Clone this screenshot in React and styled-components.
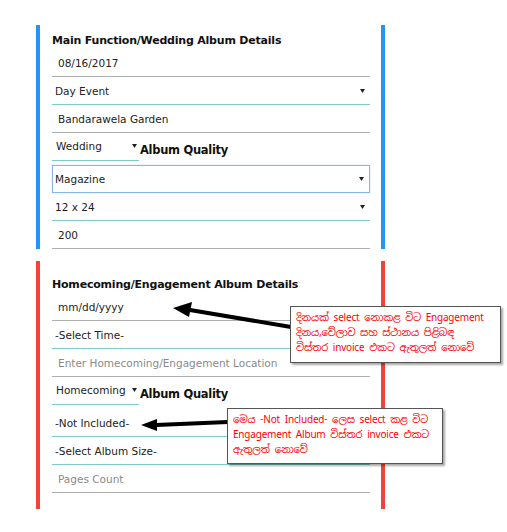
import React from "react";
import styled, { createGlobalStyle } from "styled-components";

const GlobalStyle = createGlobalStyle`
  html, body { margin: 0; padding: 0; background: #fff; }
  body { font-family: "DejaVu Sans", Verdana, sans-serif; }
`;

const Page = styled.div`
  position: relative;
  width: 507px;
  height: 532px;
  box-sizing: border-box;
  padding: 25px 0 0 36px;
  overflow: hidden;
`;

const Panel = styled.section`
  width: 349px;
  box-sizing: border-box;
  border-left: 4px solid ${(p) => p.$color};
  border-right: 4px solid ${(p) => p.$color};
  padding: ${(p) => p.$pt}px 11px ${(p) => p.$pb}px 12px;
  margin-bottom: 12px;
`;

const Title = styled.h3`
  margin: 0;
  font-size: 11px;
  letter-spacing: -0.2px;
  line-height: 16px;
  font-weight: bold;
  color: #111;
`;

const Field = styled.div`
  height: 28px;
  box-sizing: border-box;
  display: flex;
  align-items: center;
  justify-content: space-between;
  padding: 0 5px 0 ${(p) => (p.$select ? 3 : 6)}px;
  margin-top: ${(p) => (p.$gap ? 4 : 0)}px;
  border-bottom: 1px solid ${(p) => (p.$teal ? "#80cbc4" : "#b0b0b0")};
  font-size: 10.5px;
  color: ${(p) => (p.$placeholder ? "#8a8a8a" : "#222")};
`;

const FocusField = styled(Field)`
  border: 1px solid #8ab6ea;
  box-shadow: 0 0 1px rgba(80, 140, 220, 0.5);
  padding-left: 2px;
`;

const QualityRow = styled.div`
  display: flex;
  align-items: center;
  height: 28px;
`;

const SmallSelect = styled.div`
  width: 87px;
  height: 28px;
  box-sizing: border-box;
  display: flex;
  align-items: center;
  justify-content: space-between;
  padding: 0 2px 2px 4px;
  border-bottom: 1px solid #80cbc4;
  font-size: 10.5px;
  color: #222;
`;

const QualityLabel = styled.span`
  margin-left: 1px;
  font-size: 11.5px;
  letter-spacing: -0.3px;
  font-weight: bold;
  color: #111;
  padding-top: 5px;
`;

const Caret = styled.svg`
  width: 5px;
  height: 4px;
  flex: none;
`;

const Note = styled.div`
  position: absolute;
  left: ${(p) => p.$x}px;
  top: ${(p) => p.$y}px;
  width: ${(p) => p.$w}px;
  height: ${(p) => p.$h}px;
  box-sizing: border-box;
  background: #fff;
  border: 1px solid #555;
  box-shadow: 2px 2px 2px rgba(0, 0, 0, 0.35);
  padding: 3px 5px;
  color: #f00;
  font-family: "Noto Sans Sinhala", "Noto Sans", "Liberation Sans", sans-serif;
  font-size: 10px;
  letter-spacing: -0.2px;
  line-height: 15px;
  white-space: nowrap;
`;

const Arrows = styled.svg`
  position: absolute;
  left: 0;
  top: 0;
  width: 507px;
  height: 532px;
  pointer-events: none;
`;

const DownCaret = () => (
  <Caret viewBox="0 0 5 4">
    <path d="M0 0 L5 0 L2.5 4 Z" fill="#222" />
  </Caret>
);

export default function App() {
  return (
    <>
      <GlobalStyle />
      <Page>
        <Panel $color="#2196f3" $pt={8} $pb={0}>
          <Title>Main Function/Wedding Album Details</Title>
          <Field>08/16/2017</Field>
          <Field $select $teal>
            Day Event <DownCaret />
          </Field>
          <Field>Bandarawela Garden</Field>
          <QualityRow>
            <SmallSelect>
              Wedding <DownCaret />
            </SmallSelect>
            <QualityLabel>Album Quality</QualityLabel>
          </QualityRow>
          <FocusField $select $gap>
            Magazine <DownCaret />
          </FocusField>
          <Field $select $teal>
            12 x 24 <DownCaret />
          </Field>
          <Field>200</Field>
        </Panel>
        <Panel $color="#f44336" $pt={16} $pb={16}>
          <Title>Homecoming/Engagement Album Details</Title>
          <Field>mm/dd/yyyy</Field>
          <Field $select $teal>-Select Time-</Field>
          <Field $placeholder>Enter Homecoming/Engagement Location</Field>
          <QualityRow>
            <SmallSelect>
              Homecoming <DownCaret />
            </SmallSelect>
            <QualityLabel>Album Quality</QualityLabel>
          </QualityRow>
          <Field $select $teal $gap>-Not Included-</Field>
          <Field $select $teal>-Select Album Size-</Field>
          <Field $placeholder>Pages Count</Field>
        </Panel>

        <Arrows viewBox="0 0 507 532">
          <path d="M291 327 L190 310" stroke="#000" strokeWidth="4" />
          <polygon points="173,308 192,302 189,317" fill="#000" />
          <path d="M228 422 L156 425" stroke="#000" strokeWidth="4" />
          <polygon points="141,425 157,419 157,431" fill="#000" />
        </Arrows>

        <Note $x={290} $y={306} $w={211} $h={57}>
          දිනයක් select නොකළ විට Engagement
          <br />
          දිනය,වේලාව සහ ස්ථානය පිළිබඳ
          <br />
          විස්තර invoice එකට ඇතුලත් නොවේ
        </Note>
        <Note $x={227} $y={408} $w={216} $h={56}>
          මෙය -Not Included- ලෙස select කළ විට
          <br />
          Engagement Album විස්තර invoice එකට
          <br />
          ඇතුලත් නොවේ
        </Note>
      </Page>
    </>
  );
}
